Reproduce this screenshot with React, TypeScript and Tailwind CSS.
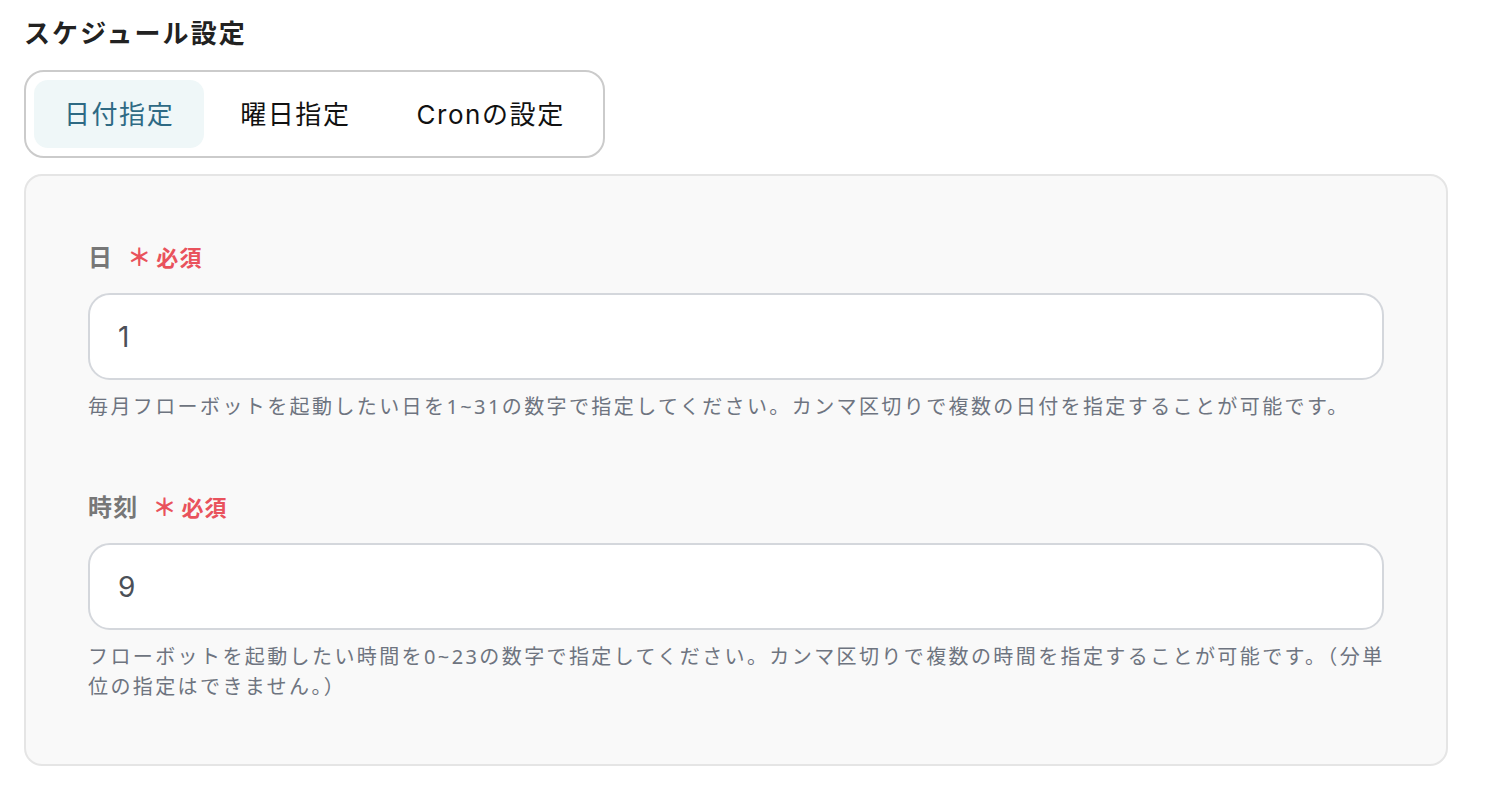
import { useState } from 'react'

const TABS = ['日付指定', '曜日指定', 'Cronの設定']

function RequiredMark() {
  return (
    <span className="ml-[14px] inline-flex items-center text-[22px] font-bold tracking-[0.05em] text-[#e9525c]">
      <span className="mr-[4px] text-[24px] font-bold leading-none">＊</span>必須
    </span>
  )
}

function Field({ label, value, help }: { label: string; value: string; help: string }) {
  return (
    <div>
      <div className="flex h-[30px] items-center">
        <span className="text-[24px] font-bold tracking-[0.05em] text-[#777777]">{label}</span>
        <RequiredMark />
      </div>
      <input
        readOnly
        value={value}
        className="mt-[21px] block h-[87px] w-full rounded-[22px] border-2 border-[#d4d7dc] bg-white px-[28px] text-[28px] text-[#4b5058] outline-none"
        style={{ fontFamily: 'Inter, "Noto Sans CJK JP", sans-serif' }}
      />
      <p className="mt-[12px] -mr-[10px] text-[20px] leading-[30px] tracking-[0.12em] text-[#6e7480]">{help}</p>
    </div>
  )
}

export default function App() {
  const [tab, setTab] = useState(0)

  return (
    <div
      className="min-h-screen bg-white px-[24px] pt-[16px]"
      style={{ fontFamily: '"Noto Sans", "Noto Sans CJK JP", sans-serif' }}
    >
      <h2 className="text-[26px] font-bold leading-[34px] tracking-[0.08em] text-[#222222]">スケジュール設定</h2>

      <div
        className="mt-[20px] inline-flex gap-[6px] rounded-[20px] border-2 border-[#cbcbcb] bg-white p-[8px]"
        style={{ fontFamily: 'Inter, "Noto Sans CJK JP", sans-serif' }}
      >
        {TABS.map((t, i) => (
          <button
            key={t}
            type="button"
            onClick={() => { setTab(i) }}
            className={
              i === tab
                ? 'h-[68px] rounded-[14px] bg-[#eff7f8] px-[30px] text-[26px] tracking-[0.06em] text-[#2e6a84]'
                : 'h-[68px] rounded-[14px] px-[30px] text-[26px] tracking-[0.06em] text-[#111111]'
            }
          >
            {t}
          </button>
        ))}
      </div>

      <div className="mt-[16px] w-[1424px] rounded-[18px] border-2 border-[#e5e5e5] bg-[#f9f9f9] px-[62px] pt-[66px] pb-[62px]">
        <Field
          label="日"
          value="1"
          help="毎月フローボットを起動したい日を1~31の数字で指定してください。カンマ区切りで複数の日付を指定することが可能です。"
        />
        <div className="mt-[70px]">
          <Field
            label="時刻"
            value="9"
            help="フローボットを起動したい時間を0~23の数字で指定してください。カンマ区切りで複数の時間を指定することが可能です。（分単位の指定はできません。）"
          />
        </div>
      </div>
    </div>
  )
}
